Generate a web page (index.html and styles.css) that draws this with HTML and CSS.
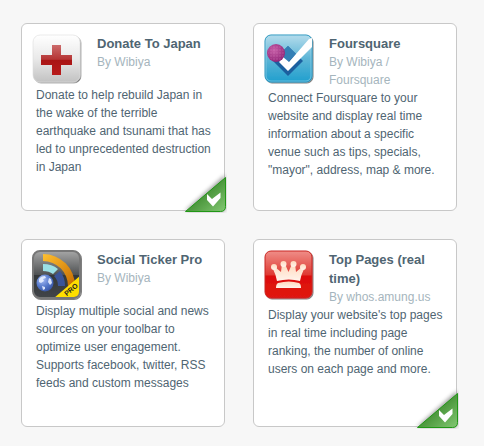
FILE: index.html
```html
<!DOCTYPE html>
<html lang="en">
<head>
<meta charset="utf-8">
<title>Apps</title>
<link rel="stylesheet" href="styles.css">
</head>
<body>
<svg class="defs" aria-hidden="true">
  <defs>
    <linearGradient id="green" x1="0" y1="0" x2="1" y2="1"><stop offset=".3" stop-color="#358326"/><stop offset="1" stop-color="#83c873"/></linearGradient>
    <filter id="soft" x="-20%" y="-20%" width="140%" height="140%"><feGaussianBlur stdDeviation="2"/></filter>
    <filter id="drop" x="-10%" y="-10%" width="125%" height="125%"><feDropShadow dx="1" dy="1" stdDeviation=".7" flood-opacity=".5"/></filter>
    <symbol id="ribbon" viewBox="0 0 46 42">
      <path d="M4 40 44 4V40Z" fill="#000" opacity=".4" filter="url(#soft)"/>
      <path d="M4.500 40.500 44.500 6.500V35.500Q44.500 40.500 39.500 40.500Z" fill="url(#green)" stroke="#219716"/>
      <path d="M26 23 31 28 39.500 21.500V27L32 35.500 26 29Z" fill="#fff"/>
    </symbol>
  </defs>
</svg>
<main class="apps">
  <article class="card">
    <header class="head">
      <svg class="icon" viewBox="0 0 50 50" aria-hidden="true">
        <defs>
          <linearGradient id="silver" x1="0" y1="0" x2="0" y2="1"><stop stop-color="#fff"/><stop offset=".5" stop-color="#e9e9e9"/><stop offset="1" stop-color="#c2c2c2"/></linearGradient>
          <linearGradient id="cross" x1="0" y1="0" x2="0" y2="1"><stop stop-color="#cc6b6b"/><stop offset=".48" stop-color="#b53434"/><stop offset=".5" stop-color="#a91414"/><stop offset="1" stop-color="#b81b1b"/></linearGradient>
        </defs>
        <rect x="1" y="1" width="47" height="47" rx="7" fill="url(#silver)" stroke="#ddd" stroke-width=".6" filter="url(#drop)"/>
        <path d="M20 11H29V21H40V31H29V41H20V31H9V21H20Z" fill="url(#cross)"/>
      </svg>
      <div class="heading">
        <h2 class="title">Donate To Japan</h2>
        <p class="author">By Wibiya</p>
      </div>
    </header>
    <p class="text">Donate to help rebuild Japan in the wake of the terrible earthquake and tsunami that has led to unprecedented destruction in Japan</p>
    <svg class="ribbon" role="img" aria-label="Installed"><use href="#ribbon"/></svg>
  </article>

  <article class="card">
    <header class="head">
      <svg class="icon" viewBox="0 0 50 50" aria-hidden="true">
        <defs>
          <linearGradient id="sky" x1="0" y1="0" x2="0" y2="1"><stop stop-color="#b5dcec"/><stop offset=".5" stop-color="#5db5d6"/><stop offset="1" stop-color="#209fce"/></linearGradient>
          <radialGradient id="ball" cx=".4" cy=".35" r=".65"><stop stop-color="#c760a8"/><stop offset="1" stop-color="#932779"/></radialGradient>
          <pattern id="dimples" width="3" height="3" patternUnits="userSpaceOnUse"><circle cx="1" cy="1" r=".7" fill="#e08cc6"/></pattern>
        </defs>
        <rect x="1" y="1" width="47" height="47" rx="6" fill="url(#sky)" stroke="#2592bc" filter="url(#drop)"/>
        <rect x="2" y="2" width="45" height="45" rx="5" fill="none" stroke="#a5daeb" stroke-width=".8" opacity=".7"/>
        <path d="M24 12 39 27 24 42 9 27Z" fill="#1b5f9f"/>
        <path d="M24 12 32 20 24 28 16 20Z" fill="#337fb5"/>
        <path d="M15 28 19 23 25 28 45 5L48 4V13L24 37Z" fill="#fff"/>
        <circle cx="12" cy="19" r="9" fill="url(#ball)"/>
        <circle cx="12" cy="19" r="8" fill="url(#dimples)" opacity=".45"/>
      </svg>
      <div class="heading">
        <h2 class="title">Foursquare</h2>
        <p class="author">By Wibiya / Foursquare</p>
      </div>
    </header>
    <p class="text">Connect Foursquare to your website and display real time information about a specific venue such as tips, specials, "mayor", address, map &amp; more.</p>
  </article>

  <article class="card">
    <header class="head">
      <svg class="icon" viewBox="0 0 50 50" aria-hidden="true">
        <defs>
          <linearGradient id="steel" x1="0" y1="0" x2="0" y2="1"><stop stop-color="#a6a6a6"/><stop offset=".5" stop-color="#505354"/><stop offset=".52" stop-color="#34383a"/><stop offset="1" stop-color="#414548"/></linearGradient>
          <linearGradient id="amber" x1="0" y1="0" x2="1" y2="1"><stop stop-color="#ffc131"/><stop offset="1" stop-color="#c66a00"/></linearGradient>
          <radialGradient id="globe" cx=".35" cy=".3" r=".75"><stop stop-color="#a7bdf5"/><stop offset=".6" stop-color="#5276c9"/><stop offset="1" stop-color="#3855a3"/></radialGradient>
          <clipPath id="tile"><rect x="2" y="2" width="45" height="45" rx="5"/></clipPath>
        </defs>
        <rect x="1" y="1" width="47" height="47" rx="7" fill="url(#steel)" stroke="#777" stroke-width="2" filter="url(#drop)"/>
        <path d="M11 4A32 32 0 0 1 43 36H36A25 25 0 0 0 11 11Z" fill="url(#amber)"/>
        <path d="M11 14Q20 14 26 19L21 24Q17 21 11 21Z" fill="#9be0e6"/>
        <path d="M28 21Q33 27 33 36H26Q26 30 22 26Z" fill="#3b5499"/>
        <circle cx="13" cy="33" r="8.500" fill="url(#globe)"/>
        <path d="M7 29Q9 26 13 26L14 28 11 29 12 31 9 33 7 32ZM17 28 19 29 20 33 18 35 16 32ZM10 36 13 37 13 39 11 40Z" fill="#e8efff" opacity=".9"/>
        <g clip-path="url(#tile)">
          <path d="M22 48 48 26V48Z" fill="#ffdf00"/>
          <text class="pro" text-anchor="middle" transform="translate(40.500 41.500) rotate(-40)">PRO</text>
        </g>
      </svg>
      <div class="heading">
        <h2 class="title">Social Ticker Pro</h2>
        <p class="author">By Wibiya</p>
      </div>
    </header>
    <p class="text">Display multiple social and news sources on your toolbar to optimize user engagement. Supports facebook, twitter, RSS feeds and custom messages</p>
  </article>

  <article class="card">
    <header class="head">
      <svg class="icon" viewBox="0 0 50 50" aria-hidden="true">
        <defs>
          <linearGradient id="ruby" x1="0" y1="0" x2="0" y2="1"><stop stop-color="#ef8d87"/><stop offset=".5" stop-color="#df3b34"/><stop offset=".54" stop-color="#dc0e0b"/><stop offset="1" stop-color="#e01912"/></linearGradient>
          <linearGradient id="cream" x1="0" y1="0" x2="0" y2="1"><stop stop-color="#ffd9bd"/><stop offset="1" stop-color="#fff4ec"/></linearGradient>
        </defs>
        <rect x="1" y="1" width="47" height="47" rx="6" fill="url(#ruby)" stroke="#c92722" filter="url(#drop)"/>
        <g fill="url(#cream)">
          <path d="M13 31Q12 25 9 19L11 17 17 22 18 14H21L24.500 22 28 14H31L32 22 38 17 40 19Q37 25 36 31Q25 28 13 31Z"/>
          <circle cx="10" cy="17" r="3"/><circle cx="19.500" cy="14" r="3"/><circle cx="29.500" cy="14" r="3"/><circle cx="39" cy="17" r="3"/>
          <path d="M14 33Q25 30 35 33Q37 34 37 38H12Q12 34 14 33Z"/>
        </g>
      </svg>
      <div class="heading">
        <h2 class="title">Top Pages (real time)</h2>
        <p class="author">By whos.amung.us</p>
      </div>
    </header>
    <p class="text">Display your website's top pages in real time including page ranking, the number of online users on each page and more.</p>
    <svg class="ribbon" role="img" aria-label="Installed"><use href="#ribbon"/></svg>
  </article>
</main>
</body>
</html>
```

FILE: styles.css
```css
* {
  box-sizing: border-box;
}

body {
  margin: 0;
  background: #f7f7f7;
  color: #4f6572;
  font-family: "Liberation Sans", Arial, sans-serif;
  font-size: 12px;
  line-height: 18px;
}

.defs {
  position: absolute;
  width: 0;
  height: 0;
}

.apps {
  display: grid;
  grid-template-columns: 1fr 1fr;
  gap: 28px;
  padding: 23px 27px 19px 21px;
}

.card {
  position: relative;
  min-height: 188px;
  padding: 10px 8px 10px 10px;
  background: #fff;
  border: 1px solid #c8c8c8;
  border-radius: 6px;
}

.head {
  display: flex;
  gap: 15px;
  min-height: 52px;
}

.icon {
  flex: none;
  width: 50px;
  height: 50px;
}

.title,
.author,
.text {
  margin: 0;
}

.title {
  font-size: 13px;
  line-height: 19px;
}

.author {
  color: #a5b5bd;
}

.text {
  padding-left: 4px;
}

.pro {
  fill: #222;
  font-size: 7px;
  font-weight: bold;
}

.ribbon {
  position: absolute;
  right: -3px;
  bottom: -3px;
  width: 46px;
  height: 42px;
}
```
